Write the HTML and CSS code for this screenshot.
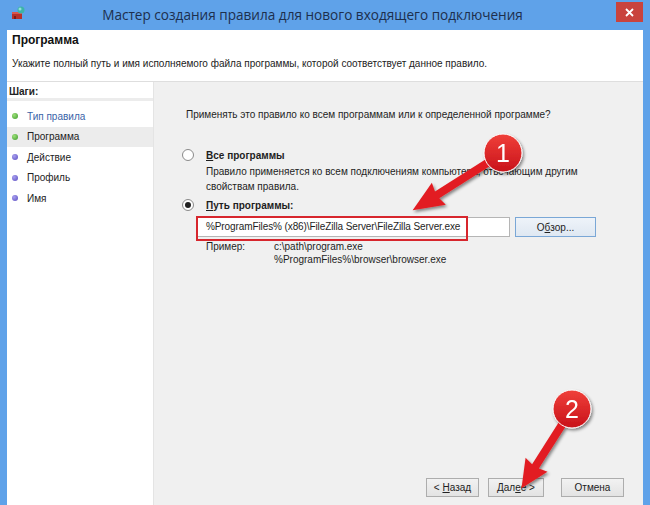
FILE: index.html
```html
<!DOCTYPE html>
<html lang="ru">
<head>
<meta charset="utf-8">
<link rel="stylesheet" href="styles.css">
</head>
<body>
<div class="window">
  <div class="titlebar">
    <svg class="app-icon" width="16" height="16" viewBox="0 0 16 16">
      <rect x="2" y="7" width="10" height="7" fill="#b8312a"/>
      <rect x="2" y="7" width="10" height="2" fill="#d9574c"/>
      <rect x="4" y="11" width="2" height="3" fill="#7a1d17"/>
      <circle cx="11" cy="5" r="3.5" fill="#3cb4a8"/>
      <circle cx="10" cy="4" r="1.5" fill="#8fe0d6"/>
    </svg>
    <div class="title">Мастер создания правила для нового входящего подключения</div>
    <div class="close">
      <svg width="9" height="9" viewBox="0 0 9 9"><path d="M1 1L8 8M8 1L1 8" stroke="#fff" stroke-width="1.8"/></svg>
    </div>
  </div>
  <div class="client">
    <div class="header">
      <h1>Программа</h1>
      <p>Укажите полный путь и имя исполняемого файла программы, которой соответствует данное правило.</p>
    </div>
    <div class="body">
      <aside class="steps">
        <div class="steps-title">Шаги:</div>
        <ul>
          <li class="done link"><span class="dot green"></span>Тип правила</li>
          <li class="done current"><span class="dot green"></span>Программа</li>
          <li><span class="dot purple"></span>Действие</li>
          <li><span class="dot purple"></span>Профиль</li>
          <li><span class="dot purple"></span>Имя</li>
        </ul>
      </aside>
      <main class="content">
        <p class="question">Применять это правило ко всем программам или к определенной программе?</p>
        <div class="option">
          <span class="radio"></span>
          <span class="opt-label"><u>В</u>се программы</span>
        </div>
        <p class="opt-desc">Правило применяется ко всем подключениям компьютера, отвечающим другим свойствам правила.</p>
        <div class="option second">
          <span class="radio checked"></span>
          <span class="opt-label"><u>П</u>уть программы:</span>
        </div>
        <div class="path-row">
          <div class="input">%ProgramFiles% (x86)\FileZilla Server\FileZilla Server.exe</div>
          <div class="btn browse">О<u>б</u>зор...</div>
        </div>
        <div class="example">
          <span class="ex-label">Пример:</span>
          <span class="ex-values">c:\path\program.exe<br>%ProgramFiles%\browser\browser.exe</span>
        </div>
        <div class="buttons">
          <div class="btn">&lt;&nbsp;<u>Н</u>азад</div>
          <div class="btn">Дал<u>е</u>е &gt;</div>
          <div class="btn gap">Отмена</div>
        </div>
      </main>
    </div>
  </div>
  <div class="highlight"></div>
  <svg class="annot" width="650" height="505" viewBox="0 0 650 505">
    <defs>
      <filter id="sh" x="-20%" y="-20%" width="140%" height="140%">
        <feDropShadow dx="1.5" dy="2" stdDeviation="1.5" flood-color="#000" flood-opacity="0.45"/>
      </filter>
      <linearGradient id="rg" x1="0" y1="0" x2="0" y2="1">
        <stop offset="0" stop-color="#f0403a"/>
        <stop offset="1" stop-color="#c8121a"/>
      </linearGradient>
    </defs>
    <g filter="url(#sh)">
      <g transform="translate(503,153) rotate(147.6)">
        <path d="M16 -4 L78 -4 L76 -13 L107 0 L76 13 L78 4 L16 4 Z" fill="#e21d22"/>
      </g>
      <circle cx="503" cy="153" r="19" fill="url(#rg)" stroke="#fff" stroke-width="1"/>
      <g transform="translate(572,409) rotate(122.5)">
        <path d="M16 -4 L68 -4 L66 -13 L94 0 L66 13 L68 4 L16 4 Z" fill="#e21d22"/>
      </g>
      <circle cx="572" cy="409" r="19" fill="url(#rg)" stroke="#fff" stroke-width="1"/>
    </g>
    <text x="503" y="162" class="num">1</text>
    <text x="572" y="418" class="num">2</text>
  </svg>
</div>
</body>
</html>
```

FILE: styles.css
```css
* { box-sizing: border-box; }
html, body { margin: 0; padding: 0; }
body {
  width: 650px;
  height: 505px;
  overflow: hidden;
  font-family: "Liberation Sans", Arial, sans-serif;
  font-size: 10px;
  color: #1e1e1e;
}
.window {
  position: relative;
  width: 650px;
  height: 505px;
  background: #5fa2e9;
  padding: 0 7px;
  display: flex;
  flex-direction: column;
}
.titlebar {
  height: 30px;
  flex: none;
  display: flex;
  align-items: center;
  position: relative;
}
.app-icon { margin-left: 3px; margin-top: -4px; }
.title {
  flex: 1;
  text-align: center;
  font-family: "Open Sans", "Liberation Sans", sans-serif;
  font-size: 13.6px;
  color: #1d2f4d;
  padding-right: 44px;
  margin-top: -1px;
}
.close {
  position: absolute;
  right: 0;
  top: 2px;
  width: 27px;
  height: 20px;
  background: #c9433d;
  display: flex;
  align-items: center;
  justify-content: center;
}
.client {
  flex: 1;
  display: flex;
  flex-direction: column;
  background: #f0f0f0;
}
.header {
  background: #fff;
  height: 52px;
  padding: 3px 0 0 5px;
  border-bottom: 1px solid #dedede;
  flex: none;
}
.header h1 {
  margin: 0;
  font-size: 12px;
  font-weight: bold;
  color: #111;
}
.header p {
  margin: 11px 0 0 0;
  font-size: 10px;
  color: #222;
}
.body {
  flex: 1;
  display: flex;
}
.steps {
  width: 147px;
  background: #fff;
  border-right: 1px solid #e4e4e4;
  padding-top: 4px;
}
.steps-title {
  font-weight: bold;
  font-size: 10px;
  padding: 0 0 1px 2px;
  border-bottom: 3px solid #ececec;
  color: #222;
}
.steps ul {
  list-style: none;
  margin: 5px 0 0 0;
  padding: 0;
}
.steps li {
  height: 20.5px;
  display: flex;
  align-items: center;
  padding-left: 5px;
  font-size: 10px;
  color: #222;
}
.steps li.link { color: #3a64a8; }
.steps li.current { background: #ececec; }
.dot {
  width: 6px;
  height: 6px;
  border-radius: 50%;
  margin-right: 9px;
}
.dot.green { background: radial-gradient(circle at 35% 35%, #9de07a, #3c9a2a); }
.dot.purple { background: radial-gradient(circle at 35% 35%, #a8a0ef, #5a4cc0); }
.content {
  flex: 1;
  position: relative;
  padding: 27px 0 0 32px;
}
.question { margin: 0; font-size: 10px; }
.option {
  display: flex;
  align-items: center;
  margin-top: 29px;
  margin-left: -4px;
}
.option.second { margin-top: 5px; }
.radio {
  width: 12px;
  height: 12px;
  border-radius: 50%;
  border: 1px solid #8a8a8a;
  background: #fff;
  margin-right: 12px;
  position: relative;
}
.radio.checked::after {
  content: "";
  position: absolute;
  left: 2px;
  top: 2px;
  width: 6px;
  height: 6px;
  border-radius: 50%;
  background: #222;
}
.opt-label { font-weight: bold; font-size: 10px; }
.opt-desc {
  margin: 3px 0 0 20px;
  width: 380px;
  font-size: 10px;
  line-height: 15px;
}
.path-row {
  display: flex;
  gap: 5px;
  margin: 6px 0 0 11px;
}
.input {
  width: 313px;
  height: 20px;
  background: #fff;
  border: 1px solid #b5b5b5;
  padding: 3px 0 0 8px;
  font-size: 10px;
  letter-spacing: -0.1px;
  white-space: nowrap;
}
.btn {
  height: 20px;
  border: 1px solid #adadad;
  background: linear-gradient(#f2f2f2, #e3e3e3);
  display: flex;
  align-items: center;
  justify-content: center;
  font-size: 10px;
  color: #222;
}
.browse { width: 81px; border-color: #7aa7d6; background: linear-gradient(#eef3f9, #dfe8f2); }
.example {
  display: flex;
  margin: 3px 0 0 20px;
  font-size: 10px;
  line-height: 13px;
}
.ex-label { width: 68px; }
.buttons {
  position: absolute;
  right: 19px;
  bottom: 8px;
  display: flex;
  gap: 9px;
}
.buttons .btn { width: 53px; height: 19px; }
.buttons .btn:nth-child(2) { width: 56px; }
.buttons .btn.gap { margin-left: 8px; width: 63px; }
.highlight {
  position: absolute;
  left: 196px;
  top: 216px;
  width: 272px;
  height: 25px;
  border: 2px solid #d7262d;
}
.annot {
  position: absolute;
  left: 0;
  top: 0;
  pointer-events: none;
}
.num {
  font-family: "Liberation Sans", Arial, sans-serif;
  font-size: 25px;
  fill: #fff;
  text-anchor: middle;
}
```
